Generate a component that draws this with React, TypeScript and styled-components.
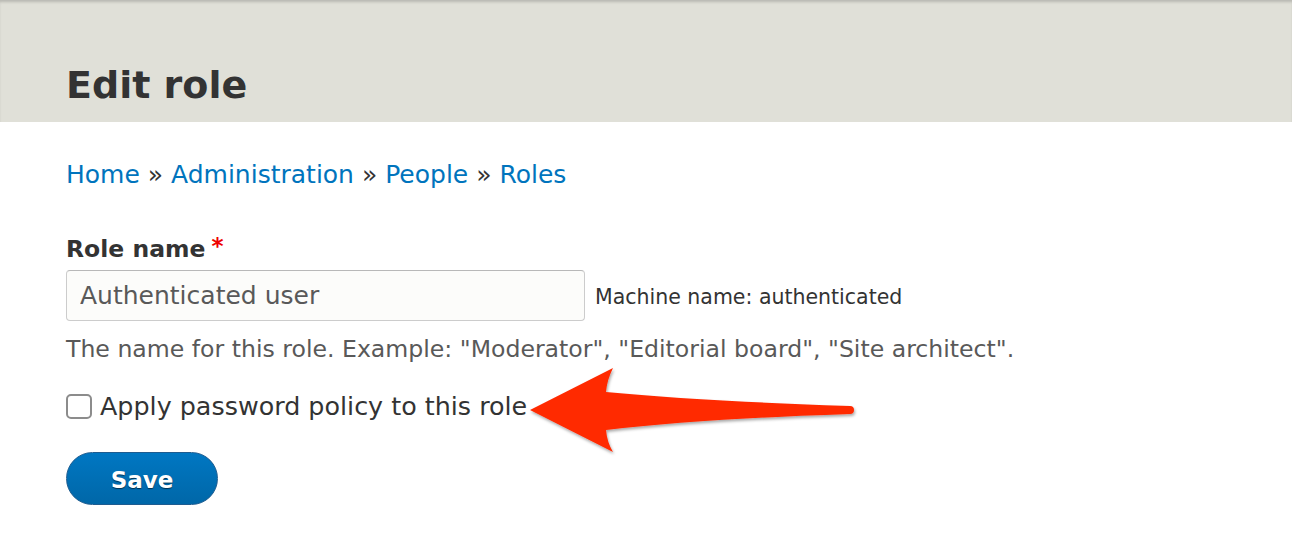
import React, { FC } from 'react';
import styled, { createGlobalStyle } from 'styled-components';

const GlobalStyle = createGlobalStyle`
  html, body {
    margin: 0;
    padding: 0;
    background: #fff;
  }

  body {
    font-family: "DejaVu Sans", Verdana, sans-serif;
    color: #333;
  }
`;

const Page = styled.div`
  position: relative;
  width: 1292px;
  height: 554px;
  overflow: hidden;
`;

const Header = styled.header`
  height: 122px;
  box-sizing: border-box;
  padding: 66px 66px 0;
  background: #e0e0d8;
  box-shadow: inset 0 3px 3px -1px rgba(0, 0, 0, 0.18);

  h1 {
    margin: 0;
    font-size: 38px;
    line-height: 1;
    font-weight: 700;
    color: #333;
  }
`;

const Content = styled.main`
  padding: 40px 66px 0;
`;

const Breadcrumb = styled.nav`
  font-size: 25px;
  line-height: 1;
  color: #333;

  a {
    color: #0074bd;
    text-decoration: none;
  }
`;

const Label = styled.label`
  display: block;
  margin-top: 48px;
  font-size: 23.5px;
  line-height: 1;
  font-weight: 700;

  span {
    color: #e00;
    margin-left: 6px;
    font-size: 23px;
    vertical-align: 3px;
  }
`;

const FieldRow = styled.div`
  display: flex;
  align-items: baseline;
  margin-top: 8px;
`;

const TextInput = styled.input`
  box-sizing: border-box;
  width: 519px;
  height: 51px;
  padding: 0 13px;
  border: 1px solid #ccc;
  border-top-color: #b8b8b8;
  border-radius: 4px;
  background: #fcfcfa;
  font-family: "DejaVu Sans", Verdana, sans-serif;
  font-size: 25px;
  color: #595959;
  outline: none;
`;

const MachineName = styled.small`
  margin-left: 10px;
  font-size: 20.5px;
  color: #333;
`;

const Description = styled.div`
  margin-top: 17px;
  font-size: 23.6px;
  line-height: 1;
  color: #595959;
`;

const CheckRow = styled.label`
  display: flex;
  align-items: center;
  gap: 8px;
  margin-top: 33px;
  font-size: 25.4px;
  line-height: 1;
  color: #333;
`;

const CheckBox = styled.input`
  appearance: none;
  box-sizing: border-box;
  margin: 0;
  width: 26px;
  height: 25px;
  border: 2px solid #8c8c8c;
  border-radius: 5px;
  background: #fff;
`;

const SaveButton = styled.button`
  display: block;
  margin-top: 32px;
  width: 152px;
  height: 53px;
  padding-top: 4px;
  border: 1px solid #1e5c90;
  border-radius: 27px;
  background: linear-gradient(to top, #0067a8, #0077c2);
  color: #fff;
  font-family: "DejaVu Sans", Verdana, sans-serif;
  font-size: 23px;
  font-weight: 700;
  text-shadow: 0 1px 1px rgba(0, 0, 0, 0.55);
  cursor: pointer;
`;

const Arrow = styled.svg`
  position: absolute;
  left: 520px;
  top: 360px;
  overflow: visible;
`;

const App: FC = () => (
  <Page>
    <GlobalStyle />
    <Header>
      <h1>Edit role</h1>
    </Header>
    <Content>
      <Breadcrumb>
        <a href="#">Home</a> » <a href="#">Administration</a> » <a href="#">People</a> »{' '}
        <a href="#">Roles</a>
      </Breadcrumb>
      <Label htmlFor="role-name">
        Role name<span>*</span>
      </Label>
      <FieldRow>
        <TextInput id="role-name" defaultValue="Authenticated user" />
        <MachineName>Machine name: authenticated</MachineName>
      </FieldRow>
      <Description>
        The name for this role. Example: "Moderator", "Editorial board", "Site architect".
      </Description>
      <CheckRow>
        <CheckBox type="checkbox" />
        Apply password policy to this role
      </CheckRow>
      <SaveButton type="button">Save</SaveButton>
    </Content>
    <Arrow width="345" height="105" viewBox="0 0 345 105">
      <defs>
        <filter id="arrow-shadow" x="-10%" y="-20%" width="120%" height="150%">
          <feDropShadow dx="1" dy="2" stdDeviation="1.6" floodColor="#000" floodOpacity="0.35" />
        </filter>
      </defs>
      <path
        d="M10 50 L93 8 Q87 20 86 32 Q180 41 330 46 A4 4 0 0 1 330 54 Q180 59 86 70 Q87 82 93 92 Z"
        fill="#ff2a00"
        filter="url(#arrow-shadow)"
      />
    </Arrow>
  </Page>
);

export default App;
